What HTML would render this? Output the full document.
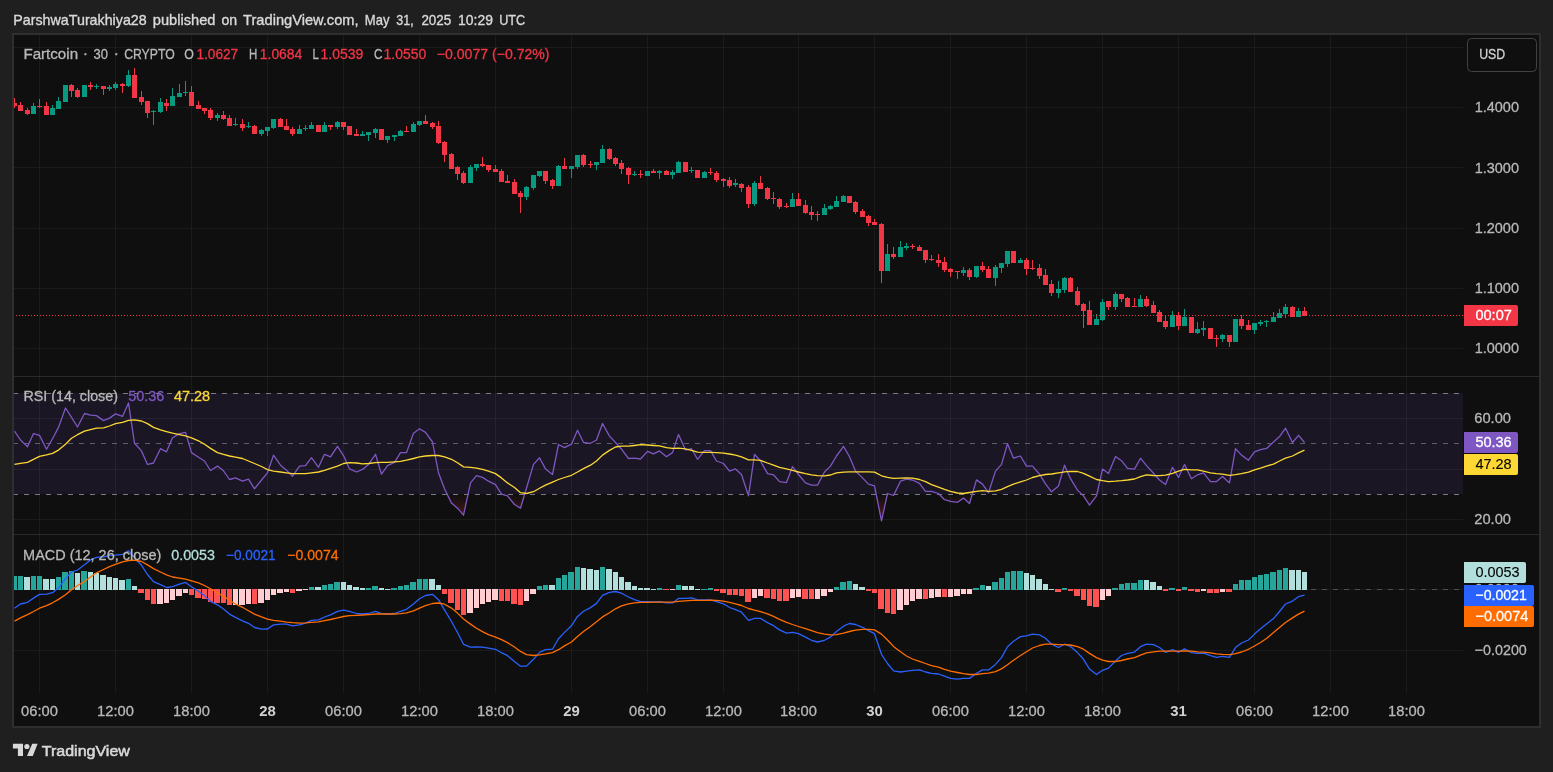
<!DOCTYPE html><html><head><meta charset="utf-8"><title>chart</title>
<style>html,body{margin:0;padding:0;background:#1f1f1f;}body{width:1553px;height:772px;overflow:hidden;font-family:"Liberation Sans",sans-serif;}svg{display:block;position:absolute;left:0;top:0;will-change:transform;}text{font-family:"Liberation Sans",sans-serif;}</style></head><body>
<svg width="1553" height="772" viewBox="0 0 1553 772">
<rect x="0" y="0" width="1553" height="772" fill="#1f1f1f"/>
<rect x="12" y="33" width="1529" height="695" fill="#2e2e2e"/>
<rect x="14" y="35" width="1525" height="691" fill="#0f0f0f"/>
<rect x="14" y="393" width="1449" height="101" fill="#1a1623"/>
<g shape-rendering="crispEdges" fill="#1b1b1b">
<rect x="39" y="35" width="1" height="658"/>
<rect x="115" y="35" width="1" height="658"/>
<rect x="191" y="35" width="1" height="658"/>
<rect x="267" y="35" width="1" height="658"/>
<rect x="343" y="35" width="1" height="658"/>
<rect x="419" y="35" width="1" height="658"/>
<rect x="495" y="35" width="1" height="658"/>
<rect x="571" y="35" width="1" height="658"/>
<rect x="647" y="35" width="1" height="658"/>
<rect x="723" y="35" width="1" height="658"/>
<rect x="798" y="35" width="1" height="658"/>
<rect x="874" y="35" width="1" height="658"/>
<rect x="950" y="35" width="1" height="658"/>
<rect x="1026" y="35" width="1" height="658"/>
<rect x="1102" y="35" width="1" height="658"/>
<rect x="1178" y="35" width="1" height="658"/>
<rect x="1254" y="35" width="1" height="658"/>
<rect x="1330" y="35" width="1" height="658"/>
<rect x="1406" y="35" width="1" height="658"/>
<rect x="14" y="47" width="1449" height="1"/>
<rect x="14" y="107" width="1449" height="1"/>
<rect x="14" y="167" width="1449" height="1"/>
<rect x="14" y="228" width="1449" height="1"/>
<rect x="14" y="288" width="1449" height="1"/>
<rect x="14" y="348" width="1449" height="1"/>
<rect x="14" y="418" width="1449" height="1"/>
<rect x="14" y="469" width="1449" height="1"/>
<rect x="14" y="519" width="1449" height="1"/>
<rect x="14" y="589" width="1449" height="1"/>
<rect x="14" y="650" width="1449" height="1"/>
</g>
<g shape-rendering="crispEdges" fill="#262231">
<rect x="39" y="393" width="1" height="101"/>
<rect x="115" y="393" width="1" height="101"/>
<rect x="191" y="393" width="1" height="101"/>
<rect x="267" y="393" width="1" height="101"/>
<rect x="343" y="393" width="1" height="101"/>
<rect x="419" y="393" width="1" height="101"/>
<rect x="495" y="393" width="1" height="101"/>
<rect x="571" y="393" width="1" height="101"/>
<rect x="647" y="393" width="1" height="101"/>
<rect x="723" y="393" width="1" height="101"/>
<rect x="798" y="393" width="1" height="101"/>
<rect x="874" y="393" width="1" height="101"/>
<rect x="950" y="393" width="1" height="101"/>
<rect x="1026" y="393" width="1" height="101"/>
<rect x="1102" y="393" width="1" height="101"/>
<rect x="1178" y="393" width="1" height="101"/>
<rect x="1254" y="393" width="1" height="101"/>
<rect x="1330" y="393" width="1" height="101"/>
<rect x="1406" y="393" width="1" height="101"/>
<rect x="14" y="418" width="1449" height="1"/>
<rect x="14" y="469" width="1449" height="1"/>
</g>
<g shape-rendering="crispEdges" fill="#2a2a2a"><rect x="14" y="376" width="1525" height="1"/><rect x="14" y="534" width="1525" height="1"/></g>
<defs><clipPath id="cp"><rect x="14" y="35" width="1449" height="691"/></clipPath>
<linearGradient id="os" x1="0" y1="494" x2="0" y2="534" gradientUnits="userSpaceOnUse"><stop offset="0" stop-color="#f23645" stop-opacity="0"/><stop offset="1" stop-color="#f23645" stop-opacity="0.45"/></linearGradient>
<clipPath id="below"><rect x="14" y="494" width="1449" height="40"/></clipPath>
</defs>
<line x1="14" y1="393.5" x2="1463" y2="393.5" stroke="#787b86" stroke-width="1" stroke-dasharray="5 6" stroke-dashoffset="1" shape-rendering="crispEdges"/>
<line x1="14" y1="443.5" x2="1463" y2="443.5" stroke="#5d606b" stroke-width="1" stroke-dasharray="5 6" stroke-dashoffset="1" shape-rendering="crispEdges"/>
<line x1="14" y1="494.5" x2="1463" y2="494.5" stroke="#787b86" stroke-width="1" stroke-dasharray="5 6" stroke-dashoffset="1" shape-rendering="crispEdges"/>
<line x1="14" y1="589.5" x2="1463" y2="589.5" stroke="#505050" stroke-width="1" stroke-dasharray="5 6" stroke-dashoffset="1" shape-rendering="crispEdges"/>
<g clip-path="url(#cp)">
<g shape-rendering="crispEdges">
<rect x="14" y="98" width="1" height="10" fill="#f23645"/>
<rect x="12" y="103" width="5" height="3" fill="#f23645"/>
<rect x="20" y="102" width="1" height="9" fill="#f23645"/>
<rect x="18" y="105" width="5" height="6" fill="#f23645"/>
<rect x="27" y="108" width="1" height="7" fill="#f23645"/>
<rect x="25" y="110" width="5" height="4" fill="#f23645"/>
<rect x="33" y="103" width="1" height="11" fill="#089981"/>
<rect x="31" y="106" width="5" height="8" fill="#089981"/>
<rect x="39" y="99" width="1" height="9" fill="#f23645"/>
<rect x="37" y="106" width="5" height="1" fill="#f23645"/>
<rect x="46" y="102" width="1" height="13" fill="#f23645"/>
<rect x="44" y="106" width="5" height="9" fill="#f23645"/>
<rect x="52" y="105" width="1" height="10" fill="#089981"/>
<rect x="50" y="108" width="5" height="7" fill="#089981"/>
<rect x="58" y="97" width="1" height="12" fill="#089981"/>
<rect x="56" y="101" width="5" height="8" fill="#089981"/>
<rect x="65" y="85" width="1" height="17" fill="#089981"/>
<rect x="63" y="85" width="5" height="17" fill="#089981"/>
<rect x="71" y="84" width="1" height="13" fill="#f23645"/>
<rect x="69" y="85" width="5" height="6" fill="#f23645"/>
<rect x="77" y="88" width="1" height="10" fill="#f23645"/>
<rect x="75" y="90" width="5" height="7" fill="#f23645"/>
<rect x="84" y="85" width="1" height="12" fill="#089981"/>
<rect x="82" y="85" width="5" height="12" fill="#089981"/>
<rect x="90" y="82" width="1" height="8" fill="#f23645"/>
<rect x="88" y="85" width="5" height="2" fill="#f23645"/>
<rect x="96" y="84" width="1" height="5" fill="#089981"/>
<rect x="94" y="86" width="5" height="1" fill="#089981"/>
<rect x="103" y="86" width="1" height="9" fill="#f23645"/>
<rect x="101" y="86" width="5" height="3" fill="#f23645"/>
<rect x="109" y="85" width="1" height="6" fill="#089981"/>
<rect x="107" y="87" width="5" height="2" fill="#089981"/>
<rect x="115" y="82" width="1" height="8" fill="#089981"/>
<rect x="113" y="84" width="5" height="4" fill="#089981"/>
<rect x="122" y="83" width="1" height="10" fill="#f23645"/>
<rect x="120" y="84" width="5" height="2" fill="#f23645"/>
<rect x="128" y="70" width="1" height="17" fill="#089981"/>
<rect x="126" y="75" width="5" height="11" fill="#089981"/>
<rect x="134" y="68" width="1" height="30" fill="#f23645"/>
<rect x="132" y="75" width="5" height="23" fill="#f23645"/>
<rect x="141" y="91" width="1" height="14" fill="#f23645"/>
<rect x="139" y="97" width="5" height="5" fill="#f23645"/>
<rect x="147" y="101" width="1" height="17" fill="#f23645"/>
<rect x="145" y="101" width="5" height="12" fill="#f23645"/>
<rect x="153" y="110" width="1" height="15" fill="#089981"/>
<rect x="151" y="111" width="5" height="1" fill="#089981"/>
<rect x="160" y="98" width="1" height="15" fill="#089981"/>
<rect x="158" y="102" width="5" height="10" fill="#089981"/>
<rect x="166" y="99" width="1" height="12" fill="#f23645"/>
<rect x="164" y="103" width="5" height="3" fill="#f23645"/>
<rect x="172" y="88" width="1" height="18" fill="#089981"/>
<rect x="170" y="96" width="5" height="10" fill="#089981"/>
<rect x="179" y="84" width="1" height="13" fill="#089981"/>
<rect x="177" y="93" width="5" height="4" fill="#089981"/>
<rect x="185" y="81" width="1" height="15" fill="#089981"/>
<rect x="183" y="92" width="5" height="1" fill="#089981"/>
<rect x="191" y="86" width="1" height="20" fill="#f23645"/>
<rect x="189" y="92" width="5" height="14" fill="#f23645"/>
<rect x="198" y="101" width="1" height="8" fill="#f23645"/>
<rect x="196" y="105" width="5" height="4" fill="#f23645"/>
<rect x="204" y="108" width="1" height="6" fill="#f23645"/>
<rect x="202" y="108" width="5" height="3" fill="#f23645"/>
<rect x="210" y="108" width="1" height="12" fill="#f23645"/>
<rect x="208" y="110" width="5" height="8" fill="#f23645"/>
<rect x="217" y="113" width="1" height="8" fill="#089981"/>
<rect x="215" y="115" width="5" height="3" fill="#089981"/>
<rect x="223" y="111" width="1" height="9" fill="#f23645"/>
<rect x="221" y="115" width="5" height="4" fill="#f23645"/>
<rect x="229" y="115" width="1" height="11" fill="#f23645"/>
<rect x="227" y="118" width="5" height="8" fill="#f23645"/>
<rect x="235" y="118" width="1" height="8" fill="#089981"/>
<rect x="233" y="124" width="5" height="1" fill="#089981"/>
<rect x="242" y="119" width="1" height="12" fill="#f23645"/>
<rect x="240" y="124" width="5" height="4" fill="#f23645"/>
<rect x="248" y="122" width="1" height="6" fill="#089981"/>
<rect x="246" y="126" width="5" height="1" fill="#089981"/>
<rect x="254" y="125" width="1" height="9" fill="#f23645"/>
<rect x="252" y="126" width="5" height="8" fill="#f23645"/>
<rect x="261" y="129" width="1" height="7" fill="#089981"/>
<rect x="259" y="130" width="5" height="4" fill="#089981"/>
<rect x="267" y="127" width="1" height="9" fill="#089981"/>
<rect x="265" y="127" width="5" height="4" fill="#089981"/>
<rect x="273" y="119" width="1" height="10" fill="#089981"/>
<rect x="271" y="119" width="5" height="9" fill="#089981"/>
<rect x="280" y="118" width="1" height="9" fill="#f23645"/>
<rect x="278" y="119" width="5" height="8" fill="#f23645"/>
<rect x="286" y="119" width="1" height="11" fill="#f23645"/>
<rect x="284" y="126" width="5" height="4" fill="#f23645"/>
<rect x="292" y="127" width="1" height="9" fill="#f23645"/>
<rect x="290" y="129" width="5" height="5" fill="#f23645"/>
<rect x="299" y="125" width="1" height="9" fill="#089981"/>
<rect x="297" y="129" width="5" height="5" fill="#089981"/>
<rect x="305" y="125" width="1" height="6" fill="#089981"/>
<rect x="303" y="128" width="5" height="1" fill="#089981"/>
<rect x="311" y="122" width="1" height="7" fill="#089981"/>
<rect x="309" y="125" width="5" height="4" fill="#089981"/>
<rect x="318" y="125" width="1" height="7" fill="#f23645"/>
<rect x="316" y="125" width="5" height="7" fill="#f23645"/>
<rect x="324" y="122" width="1" height="10" fill="#089981"/>
<rect x="322" y="125" width="5" height="7" fill="#089981"/>
<rect x="330" y="125" width="1" height="5" fill="#f23645"/>
<rect x="328" y="125" width="5" height="2" fill="#f23645"/>
<rect x="337" y="121" width="1" height="8" fill="#089981"/>
<rect x="335" y="122" width="5" height="5" fill="#089981"/>
<rect x="343" y="122" width="1" height="8" fill="#f23645"/>
<rect x="341" y="122" width="5" height="5" fill="#f23645"/>
<rect x="349" y="126" width="1" height="9" fill="#f23645"/>
<rect x="347" y="126" width="5" height="9" fill="#f23645"/>
<rect x="356" y="129" width="1" height="7" fill="#f23645"/>
<rect x="354" y="134" width="5" height="2" fill="#f23645"/>
<rect x="362" y="131" width="1" height="5" fill="#089981"/>
<rect x="360" y="134" width="5" height="2" fill="#089981"/>
<rect x="368" y="132" width="1" height="9" fill="#089981"/>
<rect x="366" y="132" width="5" height="3" fill="#089981"/>
<rect x="375" y="128" width="1" height="10" fill="#089981"/>
<rect x="373" y="129" width="5" height="4" fill="#089981"/>
<rect x="381" y="129" width="1" height="11" fill="#f23645"/>
<rect x="379" y="129" width="5" height="11" fill="#f23645"/>
<rect x="387" y="136" width="1" height="7" fill="#089981"/>
<rect x="385" y="136" width="5" height="4" fill="#089981"/>
<rect x="394" y="135" width="1" height="6" fill="#089981"/>
<rect x="392" y="135" width="5" height="2" fill="#089981"/>
<rect x="400" y="130" width="1" height="6" fill="#089981"/>
<rect x="398" y="131" width="5" height="5" fill="#089981"/>
<rect x="406" y="126" width="1" height="6" fill="#f23645"/>
<rect x="404" y="131" width="5" height="1" fill="#f23645"/>
<rect x="413" y="122" width="1" height="10" fill="#089981"/>
<rect x="411" y="124" width="5" height="8" fill="#089981"/>
<rect x="419" y="121" width="1" height="5" fill="#089981"/>
<rect x="417" y="121" width="5" height="4" fill="#089981"/>
<rect x="425" y="115" width="1" height="9" fill="#f23645"/>
<rect x="423" y="121" width="5" height="3" fill="#f23645"/>
<rect x="432" y="122" width="1" height="7" fill="#f23645"/>
<rect x="430" y="123" width="5" height="4" fill="#f23645"/>
<rect x="438" y="121" width="1" height="23" fill="#f23645"/>
<rect x="436" y="126" width="5" height="17" fill="#f23645"/>
<rect x="444" y="141" width="1" height="21" fill="#f23645"/>
<rect x="442" y="142" width="5" height="13" fill="#f23645"/>
<rect x="451" y="153" width="1" height="16" fill="#f23645"/>
<rect x="449" y="154" width="5" height="15" fill="#f23645"/>
<rect x="457" y="166" width="1" height="14" fill="#f23645"/>
<rect x="455" y="167" width="5" height="7" fill="#f23645"/>
<rect x="463" y="171" width="1" height="13" fill="#f23645"/>
<rect x="461" y="173" width="5" height="10" fill="#f23645"/>
<rect x="470" y="165" width="1" height="18" fill="#089981"/>
<rect x="468" y="167" width="5" height="16" fill="#089981"/>
<rect x="476" y="164" width="1" height="7" fill="#089981"/>
<rect x="474" y="164" width="5" height="4" fill="#089981"/>
<rect x="482" y="157" width="1" height="10" fill="#f23645"/>
<rect x="480" y="164" width="5" height="2" fill="#f23645"/>
<rect x="488" y="165" width="1" height="7" fill="#f23645"/>
<rect x="486" y="165" width="5" height="5" fill="#f23645"/>
<rect x="495" y="165" width="1" height="7" fill="#f23645"/>
<rect x="493" y="169" width="5" height="3" fill="#f23645"/>
<rect x="501" y="169" width="1" height="13" fill="#f23645"/>
<rect x="499" y="171" width="5" height="11" fill="#f23645"/>
<rect x="507" y="175" width="1" height="8" fill="#f23645"/>
<rect x="505" y="181" width="5" height="2" fill="#f23645"/>
<rect x="514" y="179" width="1" height="15" fill="#f23645"/>
<rect x="512" y="182" width="5" height="12" fill="#f23645"/>
<rect x="520" y="191" width="1" height="22" fill="#f23645"/>
<rect x="518" y="193" width="5" height="4" fill="#f23645"/>
<rect x="526" y="186" width="1" height="14" fill="#089981"/>
<rect x="524" y="187" width="5" height="10" fill="#089981"/>
<rect x="533" y="175" width="1" height="15" fill="#089981"/>
<rect x="531" y="175" width="5" height="13" fill="#089981"/>
<rect x="539" y="171" width="1" height="6" fill="#089981"/>
<rect x="537" y="171" width="5" height="5" fill="#089981"/>
<rect x="545" y="171" width="1" height="13" fill="#f23645"/>
<rect x="543" y="171" width="5" height="10" fill="#f23645"/>
<rect x="552" y="179" width="1" height="10" fill="#f23645"/>
<rect x="550" y="180" width="5" height="6" fill="#f23645"/>
<rect x="558" y="165" width="1" height="21" fill="#089981"/>
<rect x="556" y="166" width="5" height="20" fill="#089981"/>
<rect x="564" y="158" width="1" height="11" fill="#f23645"/>
<rect x="562" y="166" width="5" height="3" fill="#f23645"/>
<rect x="571" y="166" width="1" height="12" fill="#089981"/>
<rect x="569" y="166" width="5" height="3" fill="#089981"/>
<rect x="577" y="155" width="1" height="14" fill="#089981"/>
<rect x="575" y="155" width="5" height="12" fill="#089981"/>
<rect x="583" y="154" width="1" height="13" fill="#f23645"/>
<rect x="581" y="155" width="5" height="10" fill="#f23645"/>
<rect x="590" y="161" width="1" height="7" fill="#f23645"/>
<rect x="588" y="164" width="5" height="1" fill="#f23645"/>
<rect x="596" y="162" width="1" height="8" fill="#089981"/>
<rect x="594" y="162" width="5" height="3" fill="#089981"/>
<rect x="602" y="145" width="1" height="18" fill="#089981"/>
<rect x="600" y="149" width="5" height="14" fill="#089981"/>
<rect x="609" y="148" width="1" height="12" fill="#f23645"/>
<rect x="607" y="149" width="5" height="10" fill="#f23645"/>
<rect x="615" y="157" width="1" height="9" fill="#f23645"/>
<rect x="613" y="158" width="5" height="6" fill="#f23645"/>
<rect x="621" y="160" width="1" height="14" fill="#f23645"/>
<rect x="619" y="163" width="5" height="6" fill="#f23645"/>
<rect x="628" y="167" width="1" height="17" fill="#f23645"/>
<rect x="626" y="168" width="5" height="7" fill="#f23645"/>
<rect x="634" y="171" width="1" height="5" fill="#089981"/>
<rect x="632" y="174" width="5" height="1" fill="#089981"/>
<rect x="640" y="170" width="1" height="8" fill="#f23645"/>
<rect x="638" y="174" width="5" height="1" fill="#f23645"/>
<rect x="647" y="171" width="1" height="5" fill="#089981"/>
<rect x="645" y="171" width="5" height="5" fill="#089981"/>
<rect x="653" y="169" width="1" height="4" fill="#f23645"/>
<rect x="651" y="171" width="5" height="2" fill="#f23645"/>
<rect x="659" y="170" width="1" height="9" fill="#089981"/>
<rect x="657" y="171" width="5" height="2" fill="#089981"/>
<rect x="666" y="170" width="1" height="5" fill="#f23645"/>
<rect x="664" y="171" width="5" height="4" fill="#f23645"/>
<rect x="672" y="170" width="1" height="9" fill="#089981"/>
<rect x="670" y="172" width="5" height="3" fill="#089981"/>
<rect x="678" y="161" width="1" height="12" fill="#089981"/>
<rect x="676" y="162" width="5" height="11" fill="#089981"/>
<rect x="685" y="162" width="1" height="10" fill="#f23645"/>
<rect x="683" y="162" width="5" height="10" fill="#f23645"/>
<rect x="691" y="167" width="1" height="6" fill="#089981"/>
<rect x="689" y="170" width="5" height="1" fill="#089981"/>
<rect x="697" y="170" width="1" height="8" fill="#f23645"/>
<rect x="695" y="170" width="5" height="8" fill="#f23645"/>
<rect x="704" y="171" width="1" height="7" fill="#089981"/>
<rect x="702" y="172" width="5" height="6" fill="#089981"/>
<rect x="710" y="168" width="1" height="7" fill="#f23645"/>
<rect x="708" y="172" width="5" height="1" fill="#f23645"/>
<rect x="716" y="171" width="1" height="11" fill="#f23645"/>
<rect x="714" y="173" width="5" height="7" fill="#f23645"/>
<rect x="723" y="178" width="1" height="9" fill="#f23645"/>
<rect x="721" y="179" width="5" height="2" fill="#f23645"/>
<rect x="729" y="177" width="1" height="11" fill="#f23645"/>
<rect x="727" y="180" width="5" height="6" fill="#f23645"/>
<rect x="735" y="179" width="1" height="8" fill="#089981"/>
<rect x="733" y="183" width="5" height="2" fill="#089981"/>
<rect x="741" y="183" width="1" height="9" fill="#f23645"/>
<rect x="739" y="184" width="5" height="4" fill="#f23645"/>
<rect x="748" y="185" width="1" height="23" fill="#f23645"/>
<rect x="746" y="187" width="5" height="17" fill="#f23645"/>
<rect x="754" y="181" width="1" height="25" fill="#089981"/>
<rect x="752" y="183" width="5" height="21" fill="#089981"/>
<rect x="760" y="176" width="1" height="13" fill="#f23645"/>
<rect x="758" y="183" width="5" height="6" fill="#f23645"/>
<rect x="767" y="187" width="1" height="13" fill="#f23645"/>
<rect x="765" y="188" width="5" height="11" fill="#f23645"/>
<rect x="773" y="192" width="1" height="12" fill="#f23645"/>
<rect x="771" y="198" width="5" height="1" fill="#f23645"/>
<rect x="779" y="198" width="1" height="11" fill="#f23645"/>
<rect x="777" y="199" width="5" height="8" fill="#f23645"/>
<rect x="786" y="203" width="1" height="5" fill="#f23645"/>
<rect x="784" y="206" width="5" height="1" fill="#f23645"/>
<rect x="792" y="193" width="1" height="14" fill="#089981"/>
<rect x="790" y="199" width="5" height="8" fill="#089981"/>
<rect x="798" y="193" width="1" height="13" fill="#f23645"/>
<rect x="796" y="199" width="5" height="7" fill="#f23645"/>
<rect x="805" y="200" width="1" height="14" fill="#f23645"/>
<rect x="803" y="205" width="5" height="8" fill="#f23645"/>
<rect x="811" y="206" width="1" height="14" fill="#f23645"/>
<rect x="809" y="212" width="5" height="3" fill="#f23645"/>
<rect x="817" y="211" width="1" height="10" fill="#f23645"/>
<rect x="815" y="214" width="5" height="1" fill="#f23645"/>
<rect x="824" y="204" width="1" height="11" fill="#089981"/>
<rect x="822" y="208" width="5" height="7" fill="#089981"/>
<rect x="830" y="205" width="1" height="5" fill="#089981"/>
<rect x="828" y="206" width="5" height="3" fill="#089981"/>
<rect x="836" y="196" width="1" height="11" fill="#089981"/>
<rect x="834" y="201" width="5" height="6" fill="#089981"/>
<rect x="843" y="195" width="1" height="7" fill="#089981"/>
<rect x="841" y="196" width="5" height="6" fill="#089981"/>
<rect x="849" y="196" width="1" height="7" fill="#f23645"/>
<rect x="847" y="196" width="5" height="7" fill="#f23645"/>
<rect x="855" y="201" width="1" height="13" fill="#f23645"/>
<rect x="853" y="202" width="5" height="10" fill="#f23645"/>
<rect x="862" y="209" width="1" height="8" fill="#f23645"/>
<rect x="860" y="211" width="5" height="6" fill="#f23645"/>
<rect x="868" y="215" width="1" height="11" fill="#f23645"/>
<rect x="866" y="216" width="5" height="7" fill="#f23645"/>
<rect x="874" y="219" width="1" height="6" fill="#f23645"/>
<rect x="872" y="222" width="5" height="3" fill="#f23645"/>
<rect x="881" y="223" width="1" height="60" fill="#f23645"/>
<rect x="879" y="224" width="5" height="47" fill="#f23645"/>
<rect x="887" y="244" width="1" height="27" fill="#089981"/>
<rect x="885" y="254" width="5" height="17" fill="#089981"/>
<rect x="893" y="247" width="1" height="12" fill="#f23645"/>
<rect x="891" y="254" width="5" height="3" fill="#f23645"/>
<rect x="900" y="241" width="1" height="16" fill="#089981"/>
<rect x="898" y="247" width="5" height="10" fill="#089981"/>
<rect x="906" y="243" width="1" height="7" fill="#089981"/>
<rect x="904" y="246" width="5" height="2" fill="#089981"/>
<rect x="912" y="244" width="1" height="5" fill="#f23645"/>
<rect x="910" y="246" width="5" height="1" fill="#f23645"/>
<rect x="919" y="245" width="1" height="6" fill="#f23645"/>
<rect x="917" y="247" width="5" height="4" fill="#f23645"/>
<rect x="925" y="250" width="1" height="13" fill="#f23645"/>
<rect x="923" y="250" width="5" height="10" fill="#f23645"/>
<rect x="931" y="255" width="1" height="6" fill="#f23645"/>
<rect x="929" y="259" width="5" height="1" fill="#f23645"/>
<rect x="938" y="254" width="1" height="13" fill="#f23645"/>
<rect x="936" y="260" width="5" height="3" fill="#f23645"/>
<rect x="944" y="257" width="1" height="15" fill="#f23645"/>
<rect x="942" y="262" width="5" height="8" fill="#f23645"/>
<rect x="950" y="268" width="1" height="9" fill="#f23645"/>
<rect x="948" y="269" width="5" height="3" fill="#f23645"/>
<rect x="957" y="271" width="1" height="8" fill="#f23645"/>
<rect x="955" y="271" width="5" height="1" fill="#f23645"/>
<rect x="963" y="267" width="1" height="9" fill="#089981"/>
<rect x="961" y="270" width="5" height="3" fill="#089981"/>
<rect x="969" y="268" width="1" height="12" fill="#f23645"/>
<rect x="967" y="270" width="5" height="7" fill="#f23645"/>
<rect x="976" y="266" width="1" height="12" fill="#089981"/>
<rect x="974" y="266" width="5" height="11" fill="#089981"/>
<rect x="982" y="262" width="1" height="10" fill="#f23645"/>
<rect x="980" y="266" width="5" height="4" fill="#f23645"/>
<rect x="988" y="266" width="1" height="12" fill="#f23645"/>
<rect x="986" y="269" width="5" height="9" fill="#f23645"/>
<rect x="995" y="265" width="1" height="21" fill="#089981"/>
<rect x="993" y="267" width="5" height="11" fill="#089981"/>
<rect x="1001" y="263" width="1" height="10" fill="#089981"/>
<rect x="999" y="263" width="5" height="5" fill="#089981"/>
<rect x="1007" y="251" width="1" height="16" fill="#089981"/>
<rect x="1005" y="251" width="5" height="13" fill="#089981"/>
<rect x="1013" y="251" width="1" height="12" fill="#f23645"/>
<rect x="1011" y="251" width="5" height="12" fill="#f23645"/>
<rect x="1020" y="258" width="1" height="5" fill="#089981"/>
<rect x="1018" y="260" width="5" height="3" fill="#089981"/>
<rect x="1026" y="258" width="1" height="17" fill="#f23645"/>
<rect x="1024" y="260" width="5" height="9" fill="#f23645"/>
<rect x="1032" y="260" width="1" height="10" fill="#f23645"/>
<rect x="1030" y="268" width="5" height="1" fill="#f23645"/>
<rect x="1039" y="264" width="1" height="15" fill="#f23645"/>
<rect x="1037" y="268" width="5" height="8" fill="#f23645"/>
<rect x="1045" y="269" width="1" height="16" fill="#f23645"/>
<rect x="1043" y="275" width="5" height="10" fill="#f23645"/>
<rect x="1051" y="280" width="1" height="16" fill="#f23645"/>
<rect x="1049" y="284" width="5" height="9" fill="#f23645"/>
<rect x="1058" y="281" width="1" height="17" fill="#089981"/>
<rect x="1056" y="289" width="5" height="4" fill="#089981"/>
<rect x="1064" y="277" width="1" height="16" fill="#089981"/>
<rect x="1062" y="278" width="5" height="12" fill="#089981"/>
<rect x="1070" y="277" width="1" height="15" fill="#f23645"/>
<rect x="1068" y="278" width="5" height="14" fill="#f23645"/>
<rect x="1077" y="287" width="1" height="19" fill="#f23645"/>
<rect x="1075" y="291" width="5" height="14" fill="#f23645"/>
<rect x="1083" y="303" width="1" height="25" fill="#f23645"/>
<rect x="1081" y="304" width="5" height="7" fill="#f23645"/>
<rect x="1089" y="301" width="1" height="24" fill="#f23645"/>
<rect x="1087" y="310" width="5" height="15" fill="#f23645"/>
<rect x="1096" y="314" width="1" height="11" fill="#089981"/>
<rect x="1094" y="319" width="5" height="6" fill="#089981"/>
<rect x="1102" y="299" width="1" height="22" fill="#089981"/>
<rect x="1100" y="302" width="5" height="18" fill="#089981"/>
<rect x="1108" y="301" width="1" height="9" fill="#f23645"/>
<rect x="1106" y="301" width="5" height="6" fill="#f23645"/>
<rect x="1115" y="292" width="1" height="18" fill="#089981"/>
<rect x="1113" y="294" width="5" height="13" fill="#089981"/>
<rect x="1121" y="294" width="1" height="8" fill="#f23645"/>
<rect x="1119" y="294" width="5" height="5" fill="#f23645"/>
<rect x="1127" y="297" width="1" height="10" fill="#f23645"/>
<rect x="1125" y="298" width="5" height="9" fill="#f23645"/>
<rect x="1134" y="298" width="1" height="9" fill="#f23645"/>
<rect x="1132" y="306" width="5" height="1" fill="#f23645"/>
<rect x="1140" y="295" width="1" height="12" fill="#089981"/>
<rect x="1138" y="299" width="5" height="8" fill="#089981"/>
<rect x="1146" y="296" width="1" height="11" fill="#f23645"/>
<rect x="1144" y="299" width="5" height="7" fill="#f23645"/>
<rect x="1153" y="301" width="1" height="12" fill="#f23645"/>
<rect x="1151" y="305" width="5" height="8" fill="#f23645"/>
<rect x="1159" y="310" width="1" height="12" fill="#f23645"/>
<rect x="1157" y="312" width="5" height="10" fill="#f23645"/>
<rect x="1165" y="315" width="1" height="14" fill="#f23645"/>
<rect x="1163" y="321" width="5" height="6" fill="#f23645"/>
<rect x="1172" y="311" width="1" height="16" fill="#089981"/>
<rect x="1170" y="315" width="5" height="12" fill="#089981"/>
<rect x="1178" y="312" width="1" height="18" fill="#f23645"/>
<rect x="1176" y="315" width="5" height="11" fill="#f23645"/>
<rect x="1184" y="309" width="1" height="17" fill="#089981"/>
<rect x="1182" y="317" width="5" height="9" fill="#089981"/>
<rect x="1191" y="317" width="1" height="16" fill="#f23645"/>
<rect x="1189" y="317" width="5" height="16" fill="#f23645"/>
<rect x="1197" y="322" width="1" height="12" fill="#089981"/>
<rect x="1195" y="329" width="5" height="4" fill="#089981"/>
<rect x="1203" y="321" width="1" height="15" fill="#089981"/>
<rect x="1201" y="328" width="5" height="2" fill="#089981"/>
<rect x="1210" y="328" width="1" height="11" fill="#f23645"/>
<rect x="1208" y="328" width="5" height="11" fill="#f23645"/>
<rect x="1216" y="335" width="1" height="12" fill="#f23645"/>
<rect x="1214" y="338" width="5" height="1" fill="#f23645"/>
<rect x="1222" y="334" width="1" height="8" fill="#089981"/>
<rect x="1220" y="335" width="5" height="4" fill="#089981"/>
<rect x="1229" y="335" width="1" height="12" fill="#f23645"/>
<rect x="1227" y="335" width="5" height="7" fill="#f23645"/>
<rect x="1235" y="319" width="1" height="23" fill="#089981"/>
<rect x="1233" y="319" width="5" height="23" fill="#089981"/>
<rect x="1241" y="315" width="1" height="14" fill="#f23645"/>
<rect x="1239" y="319" width="5" height="7" fill="#f23645"/>
<rect x="1248" y="320" width="1" height="10" fill="#f23645"/>
<rect x="1246" y="325" width="5" height="5" fill="#f23645"/>
<rect x="1254" y="323" width="1" height="11" fill="#089981"/>
<rect x="1252" y="323" width="5" height="7" fill="#089981"/>
<rect x="1260" y="320" width="1" height="6" fill="#089981"/>
<rect x="1258" y="322" width="5" height="2" fill="#089981"/>
<rect x="1266" y="320" width="1" height="7" fill="#089981"/>
<rect x="1264" y="321" width="5" height="1" fill="#089981"/>
<rect x="1273" y="312" width="1" height="10" fill="#089981"/>
<rect x="1271" y="317" width="5" height="5" fill="#089981"/>
<rect x="1279" y="309" width="1" height="9" fill="#089981"/>
<rect x="1277" y="313" width="5" height="5" fill="#089981"/>
<rect x="1285" y="304" width="1" height="14" fill="#089981"/>
<rect x="1283" y="307" width="5" height="7" fill="#089981"/>
<rect x="1292" y="306" width="1" height="11" fill="#f23645"/>
<rect x="1290" y="307" width="5" height="10" fill="#f23645"/>
<rect x="1298" y="308" width="1" height="9" fill="#089981"/>
<rect x="1296" y="311" width="5" height="6" fill="#089981"/>
<rect x="1304" y="307" width="1" height="9" fill="#f23645"/>
<rect x="1302" y="311" width="5" height="5" fill="#f23645"/>
</g>
<line x1="13" y1="315.5" x2="1463" y2="315.5" stroke="#f23645" stroke-width="1" stroke-dasharray="1 2" shape-rendering="crispEdges"/>
<g clip-path="url(#below)"><polygon points="14.5,494 14.5,431.1 20.5,440.0 27.5,446.7 33.5,433.6 39.5,435.4 46.5,449.2 52.5,438.8 58.5,427.4 65.5,408.0 71.5,417.3 77.5,427.0 84.5,413.5 90.5,415.2 96.5,415.6 103.5,420.6 109.5,418.1 115.5,413.9 122.5,416.4 128.5,402.9 134.5,443.3 141.5,450.9 147.5,464.4 153.5,463.0 160.5,448.7 166.5,451.8 172.5,437.8 179.5,433.6 185.5,432.4 191.5,452.6 198.5,457.2 204.5,461.0 210.5,470.5 217.5,466.1 223.5,470.8 229.5,479.5 235.5,477.9 242.5,481.2 248.5,479.2 254.5,488.8 261.5,480.0 267.5,472.8 273.5,455.1 280.5,465.2 286.5,470.3 292.5,476.2 299.5,466.1 305.5,465.6 311.5,457.7 318.5,467.3 324.5,454.3 330.5,456.8 337.5,446.4 343.5,455.6 349.5,468.9 356.5,472.0 362.5,469.4 368.5,464.4 375.5,454.3 381.5,474.2 387.5,465.6 394.5,462.4 400.5,452.6 406.5,452.6 413.5,433.2 419.5,428.7 425.5,432.4 432.5,442.0 438.5,472.8 444.5,488.8 451.5,503.1 457.5,508.2 463.5,515.2 470.5,482.9 476.5,475.7 482.5,477.4 488.5,481.2 495.5,484.6 501.5,494.2 507.5,495.9 514.5,504.5 520.5,508.2 526.5,488.0 533.5,464.4 539.5,457.7 545.5,468.9 552.5,474.5 558.5,444.5 564.5,447.6 571.5,444.2 577.5,430.2 583.5,442.5 590.5,443.3 596.5,440.0 602.5,423.5 609.5,436.1 615.5,442.5 621.5,449.2 628.5,458.5 634.5,458.2 640.5,459.0 647.5,451.4 653.5,453.8 659.5,450.9 666.5,456.8 672.5,452.6 678.5,434.4 685.5,450.1 691.5,448.7 697.5,459.3 704.5,450.6 710.5,450.6 716.5,461.0 723.5,463.5 729.5,471.1 735.5,468.9 741.5,474.5 748.5,495.9 754.5,454.3 760.5,461.0 767.5,473.6 773.5,474.8 779.5,481.6 786.5,482.6 792.5,466.6 798.5,474.5 805.5,482.9 811.5,485.1 817.5,485.1 824.5,472.0 830.5,466.1 836.5,456.0 843.5,446.4 849.5,456.8 855.5,471.1 862.5,477.9 868.5,484.1 874.5,485.9 881.5,520.8 887.5,493.5 893.5,495.5 900.5,481.2 906.5,479.2 912.5,480.0 919.5,483.4 925.5,491.3 931.5,491.3 938.5,493.5 944.5,499.7 950.5,501.4 957.5,502.3 963.5,498.1 969.5,503.5 976.5,479.9 982.5,484.1 988.5,492.7 995.5,471.1 1001.5,464.4 1007.5,443.7 1013.5,458.2 1020.5,456.0 1026.5,466.1 1032.5,466.1 1039.5,474.2 1045.5,483.8 1051.5,491.8 1058.5,485.9 1064.5,465.2 1070.5,478.7 1077.5,490.1 1083.5,495.9 1089.5,505.1 1096.5,495.9 1102.5,469.1 1108.5,473.6 1115.5,456.5 1121.5,460.7 1127.5,468.3 1134.5,469.1 1140.5,458.2 1146.5,465.6 1153.5,473.3 1159.5,480.0 1165.5,484.6 1172.5,467.3 1178.5,477.4 1184.5,464.4 1191.5,478.7 1197.5,474.8 1203.5,472.8 1210.5,481.6 1216.5,481.6 1222.5,476.5 1229.5,482.9 1235.5,448.7 1241.5,455.1 1248.5,460.2 1254.5,451.8 1260.5,449.7 1266.5,448.4 1273.5,442.0 1279.5,436.6 1285.5,428.2 1292.5,442.5 1298.5,435.3 1304.5,442.5 1304.5,494" fill="url(#os)"/></g>
<polyline points="14.5,431.1 20.5,440.0 27.5,446.7 33.5,433.6 39.5,435.4 46.5,449.2 52.5,438.8 58.5,427.4 65.5,408.0 71.5,417.3 77.5,427.0 84.5,413.5 90.5,415.2 96.5,415.6 103.5,420.6 109.5,418.1 115.5,413.9 122.5,416.4 128.5,402.9 134.5,443.3 141.5,450.9 147.5,464.4 153.5,463.0 160.5,448.7 166.5,451.8 172.5,437.8 179.5,433.6 185.5,432.4 191.5,452.6 198.5,457.2 204.5,461.0 210.5,470.5 217.5,466.1 223.5,470.8 229.5,479.5 235.5,477.9 242.5,481.2 248.5,479.2 254.5,488.8 261.5,480.0 267.5,472.8 273.5,455.1 280.5,465.2 286.5,470.3 292.5,476.2 299.5,466.1 305.5,465.6 311.5,457.7 318.5,467.3 324.5,454.3 330.5,456.8 337.5,446.4 343.5,455.6 349.5,468.9 356.5,472.0 362.5,469.4 368.5,464.4 375.5,454.3 381.5,474.2 387.5,465.6 394.5,462.4 400.5,452.6 406.5,452.6 413.5,433.2 419.5,428.7 425.5,432.4 432.5,442.0 438.5,472.8 444.5,488.8 451.5,503.1 457.5,508.2 463.5,515.2 470.5,482.9 476.5,475.7 482.5,477.4 488.5,481.2 495.5,484.6 501.5,494.2 507.5,495.9 514.5,504.5 520.5,508.2 526.5,488.0 533.5,464.4 539.5,457.7 545.5,468.9 552.5,474.5 558.5,444.5 564.5,447.6 571.5,444.2 577.5,430.2 583.5,442.5 590.5,443.3 596.5,440.0 602.5,423.5 609.5,436.1 615.5,442.5 621.5,449.2 628.5,458.5 634.5,458.2 640.5,459.0 647.5,451.4 653.5,453.8 659.5,450.9 666.5,456.8 672.5,452.6 678.5,434.4 685.5,450.1 691.5,448.7 697.5,459.3 704.5,450.6 710.5,450.6 716.5,461.0 723.5,463.5 729.5,471.1 735.5,468.9 741.5,474.5 748.5,495.9 754.5,454.3 760.5,461.0 767.5,473.6 773.5,474.8 779.5,481.6 786.5,482.6 792.5,466.6 798.5,474.5 805.5,482.9 811.5,485.1 817.5,485.1 824.5,472.0 830.5,466.1 836.5,456.0 843.5,446.4 849.5,456.8 855.5,471.1 862.5,477.9 868.5,484.1 874.5,485.9 881.5,520.8 887.5,493.5 893.5,495.5 900.5,481.2 906.5,479.2 912.5,480.0 919.5,483.4 925.5,491.3 931.5,491.3 938.5,493.5 944.5,499.7 950.5,501.4 957.5,502.3 963.5,498.1 969.5,503.5 976.5,479.9 982.5,484.1 988.5,492.7 995.5,471.1 1001.5,464.4 1007.5,443.7 1013.5,458.2 1020.5,456.0 1026.5,466.1 1032.5,466.1 1039.5,474.2 1045.5,483.8 1051.5,491.8 1058.5,485.9 1064.5,465.2 1070.5,478.7 1077.5,490.1 1083.5,495.9 1089.5,505.1 1096.5,495.9 1102.5,469.1 1108.5,473.6 1115.5,456.5 1121.5,460.7 1127.5,468.3 1134.5,469.1 1140.5,458.2 1146.5,465.6 1153.5,473.3 1159.5,480.0 1165.5,484.6 1172.5,467.3 1178.5,477.4 1184.5,464.4 1191.5,478.7 1197.5,474.8 1203.5,472.8 1210.5,481.6 1216.5,481.6 1222.5,476.5 1229.5,482.9 1235.5,448.7 1241.5,455.1 1248.5,460.2 1254.5,451.8 1260.5,449.7 1266.5,448.4 1273.5,442.0 1279.5,436.6 1285.5,428.2 1292.5,442.5 1298.5,435.3 1304.5,442.5" fill="none" stroke="#7e57c2" stroke-width="1.3" stroke-linejoin="round"/>
<polyline points="14.5,464.4 20.5,463.4 27.5,462.4 33.5,459.4 39.5,456.3 46.5,454.9 52.5,453.4 58.5,450.1 65.5,444.2 71.5,438.3 77.5,434.7 84.5,431.2 90.5,429.7 96.5,428.2 103.5,427.9 109.5,426.0 115.5,423.6 122.5,422.3 128.5,420.3 134.5,419.8 141.5,421.0 147.5,423.6 153.5,427.4 160.5,429.9 166.5,431.6 172.5,433.2 179.5,434.6 185.5,435.8 191.5,437.8 198.5,440.8 204.5,444.2 210.5,448.4 217.5,452.6 223.5,454.3 229.5,456.0 235.5,457.2 242.5,458.5 248.5,461.0 254.5,463.5 261.5,466.5 267.5,469.6 273.5,471.1 280.5,472.0 286.5,472.8 292.5,473.6 299.5,473.6 305.5,473.6 311.5,472.8 318.5,472.0 324.5,470.3 330.5,468.3 337.5,466.1 343.5,463.5 349.5,462.7 356.5,463.0 362.5,463.9 368.5,463.5 375.5,462.7 381.5,462.4 387.5,462.4 394.5,461.9 400.5,461.4 406.5,460.2 413.5,458.5 419.5,456.8 425.5,456.0 432.5,455.5 438.5,455.5 444.5,456.8 451.5,459.3 457.5,462.7 463.5,466.9 470.5,467.4 476.5,468.1 482.5,469.4 488.5,471.1 495.5,473.6 501.5,477.9 507.5,482.9 514.5,487.5 520.5,492.7 526.5,493.5 533.5,491.7 539.5,488.3 545.5,485.1 552.5,482.1 558.5,479.5 564.5,477.5 571.5,475.3 577.5,472.0 583.5,468.6 590.5,465.2 596.5,461.0 602.5,455.1 609.5,450.4 615.5,447.0 621.5,446.2 628.5,446.2 634.5,445.5 640.5,444.7 647.5,445.0 653.5,445.5 659.5,445.9 666.5,447.6 672.5,448.4 678.5,448.1 685.5,448.9 691.5,450.4 697.5,452.1 704.5,452.3 710.5,452.3 716.5,452.6 723.5,453.1 729.5,454.0 735.5,455.1 741.5,456.8 748.5,459.8 754.5,459.8 760.5,460.4 767.5,463.0 773.5,465.2 779.5,467.4 786.5,468.9 792.5,470.3 798.5,472.0 805.5,473.6 811.5,474.8 817.5,475.7 824.5,475.8 830.5,475.0 836.5,472.8 843.5,472.1 849.5,471.8 855.5,471.8 862.5,471.8 868.5,471.8 874.5,472.1 881.5,475.8 887.5,477.4 893.5,478.4 900.5,478.2 906.5,477.9 912.5,478.2 919.5,479.5 925.5,481.6 931.5,484.6 938.5,487.1 944.5,489.3 950.5,491.3 957.5,493.0 963.5,493.5 969.5,492.5 976.5,491.3 982.5,490.7 988.5,491.3 995.5,490.8 1001.5,489.3 1007.5,486.6 1013.5,484.2 1020.5,481.8 1026.5,480.0 1032.5,477.5 1039.5,475.7 1045.5,474.5 1051.5,474.0 1058.5,472.8 1064.5,471.8 1070.5,471.3 1077.5,471.5 1083.5,473.3 1089.5,476.2 1096.5,479.5 1102.5,480.7 1108.5,481.6 1115.5,481.2 1121.5,480.7 1127.5,480.0 1134.5,479.0 1140.5,476.7 1146.5,474.8 1153.5,475.5 1159.5,475.7 1165.5,475.2 1172.5,473.3 1178.5,471.1 1184.5,469.4 1191.5,469.8 1197.5,469.9 1203.5,471.1 1210.5,472.8 1216.5,473.6 1222.5,474.2 1229.5,475.3 1235.5,474.6 1241.5,473.7 1248.5,472.1 1254.5,469.8 1260.5,468.1 1266.5,466.1 1273.5,464.1 1279.5,461.0 1285.5,458.2 1292.5,456.0 1298.5,452.9 1304.5,450.1" fill="none" stroke="#fdd835" stroke-width="1.3" stroke-linejoin="round"/>
<g shape-rendering="crispEdges">
<rect x="12" y="576" width="5" height="14" fill="#26a69a"/>
<rect x="18" y="576" width="5" height="14" fill="#26a69a"/>
<rect x="24" y="577" width="6" height="13" fill="#b2dfdb"/>
<rect x="31" y="576" width="5" height="14" fill="#26a69a"/>
<rect x="37" y="576" width="5" height="14" fill="#26a69a"/>
<rect x="43" y="579" width="6" height="11" fill="#b2dfdb"/>
<rect x="50" y="579" width="5" height="11" fill="#b2dfdb"/>
<rect x="56" y="577" width="5" height="13" fill="#26a69a"/>
<rect x="62" y="572" width="6" height="18" fill="#26a69a"/>
<rect x="69" y="571" width="5" height="19" fill="#26a69a"/>
<rect x="75" y="573" width="5" height="17" fill="#b2dfdb"/>
<rect x="81" y="571" width="6" height="19" fill="#26a69a"/>
<rect x="88" y="572" width="5" height="18" fill="#b2dfdb"/>
<rect x="94" y="573" width="5" height="17" fill="#b2dfdb"/>
<rect x="100" y="575" width="6" height="15" fill="#b2dfdb"/>
<rect x="107" y="577" width="5" height="13" fill="#b2dfdb"/>
<rect x="113" y="578" width="5" height="12" fill="#b2dfdb"/>
<rect x="119" y="580" width="6" height="10" fill="#b2dfdb"/>
<rect x="126" y="579" width="5" height="11" fill="#26a69a"/>
<rect x="132" y="586" width="5" height="4" fill="#b2dfdb"/>
<rect x="138" y="589" width="6" height="4" fill="#ff5252"/>
<rect x="145" y="589" width="5" height="11" fill="#ff5252"/>
<rect x="151" y="589" width="5" height="15" fill="#ff5252"/>
<rect x="157" y="589" width="6" height="15" fill="#ffcdd2"/>
<rect x="164" y="589" width="5" height="14" fill="#ffcdd2"/>
<rect x="170" y="589" width="5" height="11" fill="#ffcdd2"/>
<rect x="176" y="589" width="6" height="7" fill="#ffcdd2"/>
<rect x="183" y="589" width="5" height="4" fill="#ffcdd2"/>
<rect x="189" y="589" width="5" height="6" fill="#ff5252"/>
<rect x="195" y="589" width="6" height="9" fill="#ff5252"/>
<rect x="202" y="589" width="5" height="10" fill="#ff5252"/>
<rect x="208" y="589" width="5" height="13" fill="#ff5252"/>
<rect x="214" y="589" width="6" height="14" fill="#ff5252"/>
<rect x="221" y="589" width="5" height="14" fill="#ff5252"/>
<rect x="227" y="589" width="5" height="16" fill="#ff5252"/>
<rect x="233" y="589" width="5" height="16" fill="#ffcdd2"/>
<rect x="239" y="589" width="6" height="16" fill="#ffcdd2"/>
<rect x="246" y="589" width="5" height="15" fill="#ffcdd2"/>
<rect x="252" y="589" width="5" height="15" fill="#ff5252"/>
<rect x="258" y="589" width="6" height="14" fill="#ffcdd2"/>
<rect x="265" y="589" width="5" height="11" fill="#ffcdd2"/>
<rect x="271" y="589" width="5" height="6" fill="#ffcdd2"/>
<rect x="277" y="589" width="6" height="4" fill="#ffcdd2"/>
<rect x="284" y="589" width="5" height="3" fill="#ffcdd2"/>
<rect x="290" y="589" width="5" height="4" fill="#ff5252"/>
<rect x="296" y="589" width="6" height="2" fill="#ffcdd2"/>
<rect x="303" y="589" width="5" height="1" fill="#ffcdd2"/>
<rect x="309" y="587" width="5" height="3" fill="#26a69a"/>
<rect x="315" y="587" width="6" height="3" fill="#b2dfdb"/>
<rect x="322" y="585" width="5" height="5" fill="#26a69a"/>
<rect x="328" y="584" width="5" height="6" fill="#26a69a"/>
<rect x="334" y="582" width="6" height="8" fill="#26a69a"/>
<rect x="341" y="582" width="5" height="8" fill="#b2dfdb"/>
<rect x="347" y="585" width="5" height="5" fill="#b2dfdb"/>
<rect x="353" y="587" width="6" height="3" fill="#b2dfdb"/>
<rect x="360" y="588" width="5" height="2" fill="#b2dfdb"/>
<rect x="366" y="588" width="5" height="2" fill="#26a69a"/>
<rect x="372" y="586" width="6" height="4" fill="#26a69a"/>
<rect x="379" y="588" width="5" height="2" fill="#b2dfdb"/>
<rect x="385" y="589" width="5" height="1" fill="#b2dfdb"/>
<rect x="391" y="588" width="6" height="2" fill="#26a69a"/>
<rect x="398" y="586" width="5" height="4" fill="#26a69a"/>
<rect x="404" y="585" width="5" height="5" fill="#26a69a"/>
<rect x="410" y="582" width="6" height="8" fill="#26a69a"/>
<rect x="417" y="579" width="5" height="11" fill="#26a69a"/>
<rect x="423" y="579" width="5" height="11" fill="#26a69a"/>
<rect x="429" y="579" width="6" height="11" fill="#b2dfdb"/>
<rect x="436" y="585" width="5" height="5" fill="#b2dfdb"/>
<rect x="442" y="589" width="5" height="5" fill="#ff5252"/>
<rect x="448" y="589" width="6" height="14" fill="#ff5252"/>
<rect x="455" y="589" width="5" height="21" fill="#ff5252"/>
<rect x="461" y="589" width="5" height="26" fill="#ff5252"/>
<rect x="467" y="589" width="6" height="24" fill="#ffcdd2"/>
<rect x="474" y="589" width="5" height="19" fill="#ffcdd2"/>
<rect x="480" y="589" width="5" height="15" fill="#ffcdd2"/>
<rect x="486" y="589" width="5" height="13" fill="#ffcdd2"/>
<rect x="492" y="589" width="6" height="11" fill="#ffcdd2"/>
<rect x="499" y="589" width="5" height="12" fill="#ff5252"/>
<rect x="505" y="589" width="5" height="12" fill="#ff5252"/>
<rect x="511" y="589" width="6" height="15" fill="#ff5252"/>
<rect x="518" y="589" width="5" height="16" fill="#ff5252"/>
<rect x="524" y="589" width="5" height="12" fill="#ffcdd2"/>
<rect x="530" y="589" width="6" height="5" fill="#ffcdd2"/>
<rect x="537" y="586" width="5" height="4" fill="#26a69a"/>
<rect x="543" y="585" width="5" height="5" fill="#26a69a"/>
<rect x="549" y="585" width="6" height="5" fill="#b2dfdb"/>
<rect x="556" y="578" width="5" height="12" fill="#26a69a"/>
<rect x="562" y="575" width="5" height="15" fill="#26a69a"/>
<rect x="568" y="572" width="6" height="18" fill="#26a69a"/>
<rect x="575" y="567" width="5" height="23" fill="#26a69a"/>
<rect x="581" y="568" width="5" height="22" fill="#b2dfdb"/>
<rect x="587" y="569" width="6" height="21" fill="#b2dfdb"/>
<rect x="594" y="570" width="5" height="20" fill="#b2dfdb"/>
<rect x="600" y="567" width="5" height="23" fill="#26a69a"/>
<rect x="606" y="569" width="6" height="21" fill="#b2dfdb"/>
<rect x="613" y="572" width="5" height="18" fill="#b2dfdb"/>
<rect x="619" y="577" width="5" height="13" fill="#b2dfdb"/>
<rect x="625" y="582" width="6" height="8" fill="#b2dfdb"/>
<rect x="632" y="586" width="5" height="4" fill="#b2dfdb"/>
<rect x="638" y="588" width="5" height="2" fill="#b2dfdb"/>
<rect x="644" y="588" width="6" height="2" fill="#b2dfdb"/>
<rect x="651" y="589" width="5" height="1" fill="#b2dfdb"/>
<rect x="657" y="588" width="5" height="2" fill="#26a69a"/>
<rect x="663" y="589" width="6" height="1" fill="#ff5252"/>
<rect x="670" y="589" width="5" height="1" fill="#ffcdd2"/>
<rect x="676" y="585" width="5" height="5" fill="#26a69a"/>
<rect x="682" y="586" width="6" height="4" fill="#b2dfdb"/>
<rect x="689" y="586" width="5" height="4" fill="#b2dfdb"/>
<rect x="695" y="589" width="5" height="1" fill="#b2dfdb"/>
<rect x="701" y="589" width="6" height="1" fill="#26a69a"/>
<rect x="708" y="588" width="5" height="2" fill="#26a69a"/>
<rect x="714" y="589" width="5" height="2" fill="#ff5252"/>
<rect x="720" y="589" width="6" height="4" fill="#ff5252"/>
<rect x="727" y="589" width="5" height="6" fill="#ff5252"/>
<rect x="733" y="589" width="5" height="6" fill="#ff5252"/>
<rect x="739" y="589" width="5" height="7" fill="#ff5252"/>
<rect x="745" y="589" width="6" height="13" fill="#ff5252"/>
<rect x="752" y="589" width="5" height="9" fill="#ffcdd2"/>
<rect x="758" y="589" width="5" height="7" fill="#ffcdd2"/>
<rect x="764" y="589" width="6" height="9" fill="#ff5252"/>
<rect x="771" y="589" width="5" height="10" fill="#ff5252"/>
<rect x="777" y="589" width="5" height="12" fill="#ff5252"/>
<rect x="783" y="589" width="6" height="12" fill="#ff5252"/>
<rect x="790" y="589" width="5" height="9" fill="#ffcdd2"/>
<rect x="796" y="589" width="5" height="8" fill="#ffcdd2"/>
<rect x="802" y="589" width="6" height="10" fill="#ff5252"/>
<rect x="809" y="589" width="5" height="10" fill="#ff5252"/>
<rect x="815" y="589" width="5" height="10" fill="#ffcdd2"/>
<rect x="821" y="589" width="6" height="7" fill="#ffcdd2"/>
<rect x="828" y="589" width="5" height="3" fill="#ffcdd2"/>
<rect x="834" y="587" width="5" height="3" fill="#26a69a"/>
<rect x="840" y="582" width="6" height="8" fill="#26a69a"/>
<rect x="847" y="581" width="5" height="9" fill="#26a69a"/>
<rect x="853" y="584" width="5" height="6" fill="#b2dfdb"/>
<rect x="859" y="587" width="6" height="3" fill="#b2dfdb"/>
<rect x="866" y="589" width="5" height="2" fill="#ff5252"/>
<rect x="872" y="589" width="5" height="4" fill="#ff5252"/>
<rect x="878" y="589" width="6" height="20" fill="#ff5252"/>
<rect x="885" y="589" width="5" height="24" fill="#ff5252"/>
<rect x="891" y="589" width="5" height="25" fill="#ff5252"/>
<rect x="897" y="589" width="6" height="21" fill="#ffcdd2"/>
<rect x="904" y="589" width="5" height="16" fill="#ffcdd2"/>
<rect x="910" y="589" width="5" height="12" fill="#ffcdd2"/>
<rect x="916" y="589" width="6" height="10" fill="#ffcdd2"/>
<rect x="923" y="589" width="5" height="10" fill="#ff5252"/>
<rect x="929" y="589" width="5" height="9" fill="#ffcdd2"/>
<rect x="935" y="589" width="6" height="8" fill="#ffcdd2"/>
<rect x="942" y="589" width="5" height="8" fill="#ff5252"/>
<rect x="948" y="589" width="5" height="8" fill="#ffcdd2"/>
<rect x="954" y="589" width="6" height="7" fill="#ffcdd2"/>
<rect x="961" y="589" width="5" height="5" fill="#ffcdd2"/>
<rect x="967" y="589" width="5" height="5" fill="#ffcdd2"/>
<rect x="973" y="588" width="6" height="2" fill="#26a69a"/>
<rect x="980" y="585" width="5" height="5" fill="#26a69a"/>
<rect x="986" y="586" width="5" height="4" fill="#b2dfdb"/>
<rect x="992" y="582" width="6" height="8" fill="#26a69a"/>
<rect x="999" y="578" width="5" height="12" fill="#26a69a"/>
<rect x="1005" y="572" width="5" height="18" fill="#26a69a"/>
<rect x="1011" y="571" width="5" height="19" fill="#26a69a"/>
<rect x="1017" y="571" width="6" height="19" fill="#26a69a"/>
<rect x="1024" y="573" width="5" height="17" fill="#b2dfdb"/>
<rect x="1030" y="575" width="5" height="15" fill="#b2dfdb"/>
<rect x="1036" y="579" width="6" height="11" fill="#b2dfdb"/>
<rect x="1043" y="584" width="5" height="6" fill="#b2dfdb"/>
<rect x="1049" y="589" width="5" height="1" fill="#b2dfdb"/>
<rect x="1055" y="589" width="6" height="3" fill="#ff5252"/>
<rect x="1062" y="588" width="5" height="2" fill="#26a69a"/>
<rect x="1068" y="589" width="5" height="2" fill="#ff5252"/>
<rect x="1074" y="589" width="6" height="7" fill="#ff5252"/>
<rect x="1081" y="589" width="5" height="11" fill="#ff5252"/>
<rect x="1087" y="589" width="5" height="17" fill="#ff5252"/>
<rect x="1093" y="589" width="6" height="18" fill="#ff5252"/>
<rect x="1100" y="589" width="5" height="11" fill="#ffcdd2"/>
<rect x="1106" y="589" width="5" height="7" fill="#ffcdd2"/>
<rect x="1112" y="588" width="6" height="2" fill="#26a69a"/>
<rect x="1119" y="584" width="5" height="6" fill="#26a69a"/>
<rect x="1125" y="583" width="5" height="7" fill="#26a69a"/>
<rect x="1131" y="583" width="6" height="7" fill="#26a69a"/>
<rect x="1138" y="580" width="5" height="10" fill="#26a69a"/>
<rect x="1144" y="580" width="5" height="10" fill="#b2dfdb"/>
<rect x="1150" y="582" width="6" height="8" fill="#b2dfdb"/>
<rect x="1157" y="586" width="5" height="4" fill="#b2dfdb"/>
<rect x="1163" y="589" width="5" height="2" fill="#ff5252"/>
<rect x="1169" y="588" width="6" height="2" fill="#26a69a"/>
<rect x="1176" y="589" width="5" height="2" fill="#ff5252"/>
<rect x="1182" y="587" width="5" height="3" fill="#26a69a"/>
<rect x="1188" y="589" width="6" height="2" fill="#ff5252"/>
<rect x="1195" y="589" width="5" height="3" fill="#ff5252"/>
<rect x="1201" y="589" width="5" height="2" fill="#ffcdd2"/>
<rect x="1207" y="589" width="6" height="4" fill="#ff5252"/>
<rect x="1214" y="589" width="5" height="4" fill="#ff5252"/>
<rect x="1220" y="589" width="5" height="3" fill="#ffcdd2"/>
<rect x="1226" y="589" width="6" height="3" fill="#ff5252"/>
<rect x="1233" y="584" width="5" height="6" fill="#26a69a"/>
<rect x="1239" y="580" width="5" height="10" fill="#26a69a"/>
<rect x="1245" y="580" width="6" height="10" fill="#26a69a"/>
<rect x="1252" y="577" width="5" height="13" fill="#26a69a"/>
<rect x="1258" y="575" width="5" height="15" fill="#26a69a"/>
<rect x="1264" y="574" width="5" height="16" fill="#26a69a"/>
<rect x="1270" y="572" width="6" height="18" fill="#26a69a"/>
<rect x="1277" y="570" width="5" height="20" fill="#26a69a"/>
<rect x="1283" y="568" width="5" height="22" fill="#26a69a"/>
<rect x="1289" y="570" width="6" height="20" fill="#b2dfdb"/>
<rect x="1296" y="570" width="5" height="20" fill="#b2dfdb"/>
<rect x="1302" y="572" width="5" height="18" fill="#b2dfdb"/>
</g>
<polyline points="14.5,608.2 20.5,604.0 27.5,602.3 33.5,598.1 39.5,594.4 46.5,594.2 52.5,592.7 58.5,588.0 65.5,578.7 71.5,572.0 77.5,570.0 84.5,564.7 90.5,559.9 96.5,557.3 103.5,556.8 109.5,555.7 115.5,555.2 122.5,554.3 128.5,550.9 134.5,557.7 141.5,565.3 147.5,574.5 153.5,581.6 160.5,584.6 166.5,587.5 172.5,586.6 179.5,584.1 185.5,582.4 191.5,586.8 198.5,591.3 204.5,595.6 210.5,601.4 217.5,604.8 223.5,609.0 229.5,614.1 235.5,617.4 242.5,620.8 248.5,623.3 254.5,627.5 261.5,629.2 267.5,629.0 273.5,624.9 280.5,624.1 286.5,624.1 292.5,625.8 299.5,624.9 305.5,623.2 311.5,620.4 318.5,619.9 324.5,617.0 330.5,614.8 337.5,611.4 343.5,610.1 349.5,611.4 356.5,613.5 362.5,614.0 368.5,613.5 375.5,611.4 381.5,613.6 387.5,614.0 394.5,613.5 400.5,611.4 406.5,609.3 413.5,603.9 419.5,598.8 425.5,595.5 432.5,594.3 438.5,599.7 444.5,609.8 451.5,621.5 457.5,632.5 463.5,644.3 470.5,647.1 476.5,646.8 482.5,647.1 488.5,648.1 495.5,649.3 501.5,652.7 507.5,655.7 514.5,661.5 520.5,666.2 526.5,666.1 533.5,659.3 539.5,652.3 545.5,649.7 552.5,649.2 558.5,638.8 564.5,632.4 571.5,625.7 577.5,616.4 583.5,611.3 590.5,607.6 596.5,603.4 602.5,595.4 609.5,592.3 615.5,591.5 621.5,593.2 628.5,597.0 634.5,599.6 640.5,601.6 647.5,601.6 653.5,601.8 659.5,601.6 666.5,602.9 672.5,602.9 678.5,598.4 685.5,598.4 691.5,597.9 697.5,599.9 704.5,599.9 710.5,599.9 716.5,601.6 723.5,603.8 729.5,607.5 735.5,609.7 741.5,612.2 748.5,620.3 754.5,618.4 760.5,618.4 767.5,622.6 773.5,625.7 779.5,629.9 786.5,633.2 792.5,632.4 798.5,633.6 805.5,637.1 811.5,640.3 817.5,642.0 824.5,640.3 830.5,637.1 836.5,631.5 843.5,626.2 849.5,623.5 855.5,624.5 862.5,627.3 868.5,630.7 874.5,633.7 881.5,654.3 887.5,663.5 893.5,670.8 900.5,672.0 906.5,671.1 912.5,670.3 919.5,669.9 925.5,672.0 931.5,673.3 938.5,674.0 944.5,676.2 950.5,678.4 957.5,679.2 963.5,678.4 969.5,678.4 976.5,673.3 982.5,669.9 988.5,669.9 995.5,664.4 1001.5,657.6 1007.5,646.7 1013.5,641.2 1020.5,636.6 1026.5,635.8 1032.5,634.1 1039.5,634.9 1045.5,638.3 1051.5,644.2 1058.5,647.5 1064.5,644.2 1070.5,646.4 1077.5,652.6 1083.5,659.3 1089.5,669.1 1096.5,674.5 1102.5,670.3 1108.5,668.1 1115.5,661.0 1121.5,655.5 1127.5,653.4 1134.5,652.1 1140.5,646.7 1146.5,644.2 1153.5,644.7 1159.5,647.5 1165.5,652.3 1172.5,649.7 1178.5,652.3 1184.5,648.9 1191.5,652.6 1197.5,653.4 1203.5,653.1 1210.5,655.6 1216.5,657.3 1222.5,656.3 1229.5,657.3 1235.5,647.6 1241.5,643.0 1248.5,640.0 1254.5,634.1 1260.5,628.7 1266.5,623.9 1273.5,618.6 1279.5,611.5 1285.5,604.0 1292.5,601.1 1298.5,596.7 1304.5,595.1" fill="none" stroke="#2962ff" stroke-width="1.3" stroke-linejoin="round"/>
<polyline points="14.5,621.1 20.5,617.9 27.5,614.6 33.5,611.5 39.5,608.2 46.5,605.7 52.5,602.8 58.5,599.4 65.5,594.7 71.5,589.7 77.5,585.5 84.5,581.6 90.5,577.0 96.5,572.8 103.5,569.5 109.5,566.6 115.5,564.4 122.5,561.9 128.5,560.5 134.5,560.2 141.5,561.5 147.5,564.9 153.5,568.6 160.5,572.0 166.5,574.8 172.5,577.0 179.5,578.2 185.5,579.2 191.5,580.9 198.5,582.9 204.5,585.5 210.5,588.8 217.5,592.7 223.5,596.4 229.5,600.3 235.5,604.0 242.5,607.3 248.5,610.7 254.5,614.1 261.5,616.9 267.5,619.1 273.5,620.4 280.5,621.2 286.5,622.1 292.5,622.7 299.5,623.2 305.5,622.9 311.5,622.4 318.5,621.9 324.5,620.7 330.5,619.5 337.5,617.8 343.5,616.5 349.5,615.7 356.5,615.3 362.5,615.0 368.5,614.6 375.5,614.0 381.5,614.0 387.5,614.0 394.5,614.0 400.5,613.6 406.5,612.8 413.5,610.9 419.5,608.1 425.5,605.6 432.5,603.5 438.5,603.0 444.5,604.2 451.5,608.1 457.5,613.1 463.5,619.0 470.5,624.1 476.5,628.3 482.5,631.6 488.5,634.7 495.5,637.2 501.5,639.7 507.5,642.6 514.5,647.0 520.5,651.4 526.5,654.6 533.5,655.5 539.5,654.8 545.5,653.9 552.5,652.6 558.5,649.7 564.5,645.9 571.5,642.0 577.5,636.6 583.5,631.5 590.5,626.5 596.5,621.8 602.5,616.9 609.5,612.7 615.5,608.8 621.5,605.8 628.5,603.8 634.5,602.9 640.5,602.4 647.5,602.3 653.5,602.1 659.5,602.1 666.5,602.1 672.5,602.1 678.5,601.4 685.5,600.9 691.5,600.4 697.5,600.4 704.5,600.4 710.5,600.1 716.5,600.4 723.5,601.1 729.5,602.4 735.5,603.8 741.5,605.5 748.5,608.5 754.5,610.2 760.5,611.7 767.5,613.9 773.5,616.4 779.5,619.3 786.5,622.3 792.5,624.5 798.5,626.5 805.5,628.7 811.5,630.7 817.5,632.7 824.5,634.1 830.5,634.9 836.5,634.6 843.5,633.2 849.5,631.5 855.5,630.2 862.5,629.4 868.5,629.4 874.5,629.9 881.5,634.1 887.5,640.0 893.5,646.4 900.5,651.8 906.5,656.0 912.5,659.0 919.5,661.3 925.5,663.5 931.5,665.6 938.5,667.2 944.5,669.4 950.5,671.1 957.5,672.5 963.5,673.6 969.5,674.5 976.5,674.5 982.5,673.6 988.5,673.1 995.5,671.6 1001.5,668.9 1007.5,664.7 1013.5,660.2 1020.5,655.5 1026.5,651.8 1032.5,648.0 1039.5,645.5 1045.5,644.2 1051.5,644.2 1058.5,644.7 1064.5,644.7 1070.5,645.0 1077.5,646.7 1083.5,649.2 1089.5,653.4 1096.5,657.6 1102.5,660.2 1108.5,661.5 1115.5,661.5 1121.5,660.5 1127.5,659.0 1134.5,657.6 1140.5,655.1 1146.5,652.9 1153.5,651.8 1159.5,651.1 1165.5,651.1 1172.5,651.1 1178.5,651.1 1184.5,650.9 1191.5,651.2 1197.5,651.8 1203.5,652.1 1210.5,652.9 1216.5,653.8 1222.5,654.3 1229.5,654.6 1235.5,653.7 1241.5,652.0 1248.5,649.3 1254.5,646.0 1260.5,642.5 1266.5,638.5 1273.5,632.6 1279.5,627.5 1285.5,622.5 1292.5,617.9 1298.5,614.1 1304.5,611.2" fill="none" stroke="#ff6d00" stroke-width="1.3" stroke-linejoin="round"/>
</g>
<text x="13.3" y="25" font-size="14.5" fill="#d9d9d9" stroke="#d9d9d9" stroke-width="0.35" textLength="133.4" lengthAdjust="spacingAndGlyphs">ParshwaTurakhiya28</text>
<text x="152.8" y="25" font-size="14.5" fill="#d9d9d9" stroke="#d9d9d9" stroke-width="0.35" textLength="62.6" lengthAdjust="spacingAndGlyphs">published</text>
<text x="221.4" y="25" font-size="14.5" fill="#d9d9d9" stroke="#d9d9d9" stroke-width="0.35" textLength="15.7" lengthAdjust="spacingAndGlyphs">on</text>
<text x="243.1" y="25" font-size="14.5" fill="#d9d9d9" stroke="#d9d9d9" stroke-width="0.35" textLength="115.5" lengthAdjust="spacingAndGlyphs">TradingView.com,</text>
<text x="364.8" y="25" font-size="14.5" fill="#d9d9d9" stroke="#d9d9d9" stroke-width="0.35" textLength="24.7" lengthAdjust="spacingAndGlyphs">May</text>
<text x="396.3" y="25" font-size="14.5" fill="#d9d9d9" stroke="#d9d9d9" stroke-width="0.35" textLength="17.4" lengthAdjust="spacingAndGlyphs">31,</text>
<text x="421.4" y="25" font-size="14.5" fill="#d9d9d9" stroke="#d9d9d9" stroke-width="0.35" textLength="29.9" lengthAdjust="spacingAndGlyphs">2025</text>
<text x="458.1" y="25" font-size="14.5" fill="#d9d9d9" stroke="#d9d9d9" stroke-width="0.35" textLength="34.8" lengthAdjust="spacingAndGlyphs">10:29</text>
<text x="499.2" y="25" font-size="14.5" fill="#d9d9d9" stroke="#d9d9d9" stroke-width="0.35" textLength="26.1" lengthAdjust="spacingAndGlyphs">UTC</text>
<text x="23.4" y="58.5" font-size="14.5" fill="#b8b8b8" stroke="#b8b8b8" stroke-width="0.3" font-weight="normal" text-anchor="start" textLength="54.7" lengthAdjust="spacingAndGlyphs">Fartcoin</text>
<rect x="84.4" y="53.2" width="2" height="2" fill="#b8b8b8"/>
<text x="93.6" y="58.5" font-size="14.5" fill="#b8b8b8" stroke="#b8b8b8" stroke-width="0.3" font-weight="normal" text-anchor="start" textLength="14.4" lengthAdjust="spacingAndGlyphs">30</text>
<rect x="115.3" y="53.2" width="2" height="2" fill="#b8b8b8"/>
<text x="124.2" y="58.5" font-size="14.5" fill="#b8b8b8" stroke="#b8b8b8" stroke-width="0.3" font-weight="normal" text-anchor="start" textLength="50.5" lengthAdjust="spacingAndGlyphs">CRYPTO</text>
<text x="184.3" y="58.5" font-size="14.5" fill="#b8b8b8" stroke="#b8b8b8" stroke-width="0.3" font-weight="normal" text-anchor="start" textLength="9.6" lengthAdjust="spacingAndGlyphs">O</text>
<text x="196.4" y="58.5" font-size="14.5" fill="#f23645" stroke="#f23645" stroke-width="0.3" font-weight="normal" text-anchor="start" textLength="41.8" lengthAdjust="spacingAndGlyphs">1.0627</text>
<text x="248.9" y="58.5" font-size="14.5" fill="#b8b8b8" stroke="#b8b8b8" stroke-width="0.3" font-weight="normal" text-anchor="start" textLength="8.3" lengthAdjust="spacingAndGlyphs">H</text>
<text x="259.8" y="58.5" font-size="14.5" fill="#f23645" stroke="#f23645" stroke-width="0.3" font-weight="normal" text-anchor="start" textLength="42.5" lengthAdjust="spacingAndGlyphs">1.0684</text>
<text x="312.6" y="58.5" font-size="14.5" fill="#b8b8b8" stroke="#b8b8b8" stroke-width="0.3" font-weight="normal" text-anchor="start" textLength="6.4" lengthAdjust="spacingAndGlyphs">L</text>
<text x="320.6" y="58.5" font-size="14.5" fill="#f23645" stroke="#f23645" stroke-width="0.3" font-weight="normal" text-anchor="start" textLength="42.8" lengthAdjust="spacingAndGlyphs">1.0539</text>
<text x="374.0" y="58.5" font-size="14.5" fill="#b8b8b8" stroke="#b8b8b8" stroke-width="0.3" font-weight="normal" text-anchor="start" textLength="8.5" lengthAdjust="spacingAndGlyphs">C</text>
<text x="383.6" y="58.5" font-size="14.5" fill="#f23645" stroke="#f23645" stroke-width="0.3" font-weight="normal" text-anchor="start" textLength="42.8" lengthAdjust="spacingAndGlyphs">1.0550</text>
<text x="436.8" y="58.5" font-size="14.5" fill="#f23645" stroke="#f23645" stroke-width="0.3" font-weight="normal" text-anchor="start" textLength="112.7" lengthAdjust="spacingAndGlyphs">−0.0077 (−0.72%)</text>
<text x="23.4" y="401.2" font-size="14.5" fill="#b8b8b8" stroke="#b8b8b8" stroke-width="0.3" font-weight="normal" text-anchor="start" textLength="94.6" lengthAdjust="spacingAndGlyphs">RSI (14, close)</text>
<text x="128.3" y="401.2" font-size="14.5" fill="#7e57c2" stroke="#7e57c2" stroke-width="0.3" font-weight="normal" text-anchor="start" textLength="36.1" lengthAdjust="spacingAndGlyphs">50.36</text>
<text x="174.0" y="401.2" font-size="14.5" fill="#fdd835" stroke="#fdd835" stroke-width="0.3" font-weight="normal" text-anchor="start" textLength="36.1" lengthAdjust="spacingAndGlyphs">47.28</text>
<text x="23.1" y="559.5" font-size="14.5" fill="#b8b8b8" stroke="#b8b8b8" stroke-width="0.3" font-weight="normal" text-anchor="start" textLength="138.2" lengthAdjust="spacingAndGlyphs">MACD (12, 26, close)</text>
<text x="171.2" y="559.5" font-size="14.5" fill="#b2dfdb" stroke="#b2dfdb" stroke-width="0.3" font-weight="normal" text-anchor="start" textLength="43.8" lengthAdjust="spacingAndGlyphs">0.0053</text>
<text x="226.0" y="559.5" font-size="14.5" fill="#2962ff" stroke="#2962ff" stroke-width="0.3" font-weight="normal" text-anchor="start" textLength="49.6" lengthAdjust="spacingAndGlyphs">−0.0021</text>
<text x="287.2" y="559.5" font-size="14.5" fill="#ff6d00" stroke="#ff6d00" stroke-width="0.3" font-weight="normal" text-anchor="start" textLength="51.5" lengthAdjust="spacingAndGlyphs">−0.0074</text>
<text x="1474.7" y="112.4" font-size="15" fill="#b8b8b8" stroke="#b8b8b8" stroke-width="0.3" font-weight="normal" text-anchor="start" textLength="44.3" lengthAdjust="spacingAndGlyphs">1.4000</text>
<text x="1474.7" y="172.6" font-size="15" fill="#b8b8b8" stroke="#b8b8b8" stroke-width="0.3" font-weight="normal" text-anchor="start" textLength="44.3" lengthAdjust="spacingAndGlyphs">1.3000</text>
<text x="1474.7" y="232.9" font-size="15" fill="#b8b8b8" stroke="#b8b8b8" stroke-width="0.3" font-weight="normal" text-anchor="start" textLength="44.3" lengthAdjust="spacingAndGlyphs">1.2000</text>
<text x="1474.7" y="293.4" font-size="15" fill="#b8b8b8" stroke="#b8b8b8" stroke-width="0.3" font-weight="normal" text-anchor="start" textLength="44.3" lengthAdjust="spacingAndGlyphs">1.1000</text>
<text x="1474.7" y="353.4" font-size="15" fill="#b8b8b8" stroke="#b8b8b8" stroke-width="0.3" font-weight="normal" text-anchor="start" textLength="44.3" lengthAdjust="spacingAndGlyphs">1.0000</text>
<text x="1474.3" y="423.4" font-size="15" fill="#b8b8b8" stroke="#b8b8b8" stroke-width="0.3" font-weight="normal" text-anchor="start" textLength="36.7" lengthAdjust="spacingAndGlyphs">60.00</text>
<text x="1474.3" y="524.3" font-size="15" fill="#b8b8b8" stroke="#b8b8b8" stroke-width="0.3" font-weight="normal" text-anchor="start" textLength="36.7" lengthAdjust="spacingAndGlyphs">20.00</text>
<text x="1474.7" y="594.2" font-size="15" fill="#b8b8b8" stroke="#b8b8b8" stroke-width="0.3" font-weight="normal" text-anchor="start" textLength="44.3" lengthAdjust="spacingAndGlyphs">0.0000</text>
<text x="1474.7" y="654.9" font-size="15" fill="#b8b8b8" stroke="#b8b8b8" stroke-width="0.3" font-weight="normal" text-anchor="start" textLength="52.1" lengthAdjust="spacingAndGlyphs">−0.0200</text>
<rect x="1467.5" y="38.5" width="69" height="33" rx="4" ry="4" fill="none" stroke="#424242" stroke-width="1"/>
<text x="1479.2" y="59.2" font-size="14.5" fill="#d1d1d1" stroke="#d1d1d1" stroke-width="0.3" font-weight="normal" text-anchor="start" textLength="26.0" lengthAdjust="spacingAndGlyphs">USD</text>
<path d="M1464 305 H1516 Q1518 305 1518 307 V324 Q1518 326 1516 326 H1464 Z" fill="#f23645"/>
<text x="1475.4" y="320.4" font-size="15" fill="#ffffff" stroke="#ffffff" stroke-width="0.3" font-weight="normal" text-anchor="start" textLength="36.5" lengthAdjust="spacingAndGlyphs">00:07</text>
<path d="M1464 432 H1516 Q1518 432 1518 434 V451 Q1518 453 1516 453 H1464 Z" fill="#7e57c2"/>
<text x="1475.4" y="447.4" font-size="15" fill="#ffffff" stroke="#ffffff" stroke-width="0.3" font-weight="normal" text-anchor="start" textLength="36.3" lengthAdjust="spacingAndGlyphs">50.36</text>
<path d="M1464 454 H1516 Q1518 454 1518 456 V473 Q1518 475 1516 475 H1464 Z" fill="#fdd835"/>
<text x="1475.4" y="469.4" font-size="15" fill="#000000" stroke="#000000" stroke-width="0.1" font-weight="normal" text-anchor="start" textLength="36.3" lengthAdjust="spacingAndGlyphs">47.28</text>
<path d="M1464 562 H1524 Q1526 562 1526 564 V581 Q1526 583 1524 583 H1464 Z" fill="#b2dfdb"/>
<text x="1475.4" y="577.4" font-size="15" fill="#000000" stroke="#000000" stroke-width="0.1" font-weight="normal" text-anchor="start" textLength="44.2" lengthAdjust="spacingAndGlyphs">0.0053</text>
<path d="M1464 585 H1532 Q1534 585 1534 587 V604 Q1534 606 1532 606 H1464 Z" fill="#2962ff"/>
<text x="1475.4" y="600.4" font-size="15" fill="#ffffff" stroke="#ffffff" stroke-width="0.3" font-weight="normal" text-anchor="start" textLength="51.4" lengthAdjust="spacingAndGlyphs">−0.0021</text>
<path d="M1464 606 H1532 Q1534 606 1534 608 V625 Q1534 627 1532 627 H1464 Z" fill="#ff6d00"/>
<text x="1475.4" y="621.4" font-size="15" fill="#ffffff" stroke="#ffffff" stroke-width="0.3" font-weight="normal" text-anchor="start" textLength="53.0" lengthAdjust="spacingAndGlyphs">−0.0074</text>
<text x="21.1" y="715.5" font-size="14.5" fill="#b8b8b8" stroke="#b8b8b8" stroke-width="0.3" font-weight="normal" text-anchor="start" textLength="36.8" lengthAdjust="spacingAndGlyphs">06:00</text>
<text x="97.1" y="715.5" font-size="14.5" fill="#b8b8b8" stroke="#b8b8b8" stroke-width="0.3" font-weight="normal" text-anchor="start" textLength="36.8" lengthAdjust="spacingAndGlyphs">12:00</text>
<text x="173.1" y="715.5" font-size="14.5" fill="#b8b8b8" stroke="#b8b8b8" stroke-width="0.3" font-weight="normal" text-anchor="start" textLength="36.8" lengthAdjust="spacingAndGlyphs">18:00</text>
<text x="259.2" y="715.5" font-size="14.5" fill="#d1d1d1" font-weight="bold" text-anchor="start" textLength="16.6" lengthAdjust="spacingAndGlyphs">28</text>
<text x="325.1" y="715.5" font-size="14.5" fill="#b8b8b8" stroke="#b8b8b8" stroke-width="0.3" font-weight="normal" text-anchor="start" textLength="36.8" lengthAdjust="spacingAndGlyphs">06:00</text>
<text x="401.1" y="715.5" font-size="14.5" fill="#b8b8b8" stroke="#b8b8b8" stroke-width="0.3" font-weight="normal" text-anchor="start" textLength="36.8" lengthAdjust="spacingAndGlyphs">12:00</text>
<text x="477.1" y="715.5" font-size="14.5" fill="#b8b8b8" stroke="#b8b8b8" stroke-width="0.3" font-weight="normal" text-anchor="start" textLength="36.8" lengthAdjust="spacingAndGlyphs">18:00</text>
<text x="563.2" y="715.5" font-size="14.5" fill="#d1d1d1" font-weight="bold" text-anchor="start" textLength="16.6" lengthAdjust="spacingAndGlyphs">29</text>
<text x="629.1" y="715.5" font-size="14.5" fill="#b8b8b8" stroke="#b8b8b8" stroke-width="0.3" font-weight="normal" text-anchor="start" textLength="36.8" lengthAdjust="spacingAndGlyphs">06:00</text>
<text x="705.1" y="715.5" font-size="14.5" fill="#b8b8b8" stroke="#b8b8b8" stroke-width="0.3" font-weight="normal" text-anchor="start" textLength="36.8" lengthAdjust="spacingAndGlyphs">12:00</text>
<text x="780.1" y="715.5" font-size="14.5" fill="#b8b8b8" stroke="#b8b8b8" stroke-width="0.3" font-weight="normal" text-anchor="start" textLength="36.8" lengthAdjust="spacingAndGlyphs">18:00</text>
<text x="866.2" y="715.5" font-size="14.5" fill="#d1d1d1" font-weight="bold" text-anchor="start" textLength="16.6" lengthAdjust="spacingAndGlyphs">30</text>
<text x="932.1" y="715.5" font-size="14.5" fill="#b8b8b8" stroke="#b8b8b8" stroke-width="0.3" font-weight="normal" text-anchor="start" textLength="36.8" lengthAdjust="spacingAndGlyphs">06:00</text>
<text x="1008.1" y="715.5" font-size="14.5" fill="#b8b8b8" stroke="#b8b8b8" stroke-width="0.3" font-weight="normal" text-anchor="start" textLength="36.8" lengthAdjust="spacingAndGlyphs">12:00</text>
<text x="1084.1" y="715.5" font-size="14.5" fill="#b8b8b8" stroke="#b8b8b8" stroke-width="0.3" font-weight="normal" text-anchor="start" textLength="36.8" lengthAdjust="spacingAndGlyphs">18:00</text>
<text x="1170.2" y="715.5" font-size="14.5" fill="#d1d1d1" font-weight="bold" text-anchor="start" textLength="16.6" lengthAdjust="spacingAndGlyphs">31</text>
<text x="1236.1" y="715.5" font-size="14.5" fill="#b8b8b8" stroke="#b8b8b8" stroke-width="0.3" font-weight="normal" text-anchor="start" textLength="36.8" lengthAdjust="spacingAndGlyphs">06:00</text>
<text x="1312.1" y="715.5" font-size="14.5" fill="#b8b8b8" stroke="#b8b8b8" stroke-width="0.3" font-weight="normal" text-anchor="start" textLength="36.8" lengthAdjust="spacingAndGlyphs">12:00</text>
<text x="1388.1" y="715.5" font-size="14.5" fill="#b8b8b8" stroke="#b8b8b8" stroke-width="0.3" font-weight="normal" text-anchor="start" textLength="36.8" lengthAdjust="spacingAndGlyphs">18:00</text>
<g fill="#d9d9d9"><path d="M12.9 743.8 H23 V755.9 H17.9 V748.5 H12.9 Z"/><circle cx="26.9" cy="746.5" r="2.6"/><path d="M32.2 743.8 H37.6 L32.8 755.9 H27 Z"/></g>
<text x="41.8" y="755.5" font-size="15.5" fill="#d9d9d9" stroke="#d9d9d9" stroke-width="0.55" font-weight="normal" text-anchor="start" textLength="88.1" lengthAdjust="spacingAndGlyphs">TradingView</text>
</svg></body></html>
